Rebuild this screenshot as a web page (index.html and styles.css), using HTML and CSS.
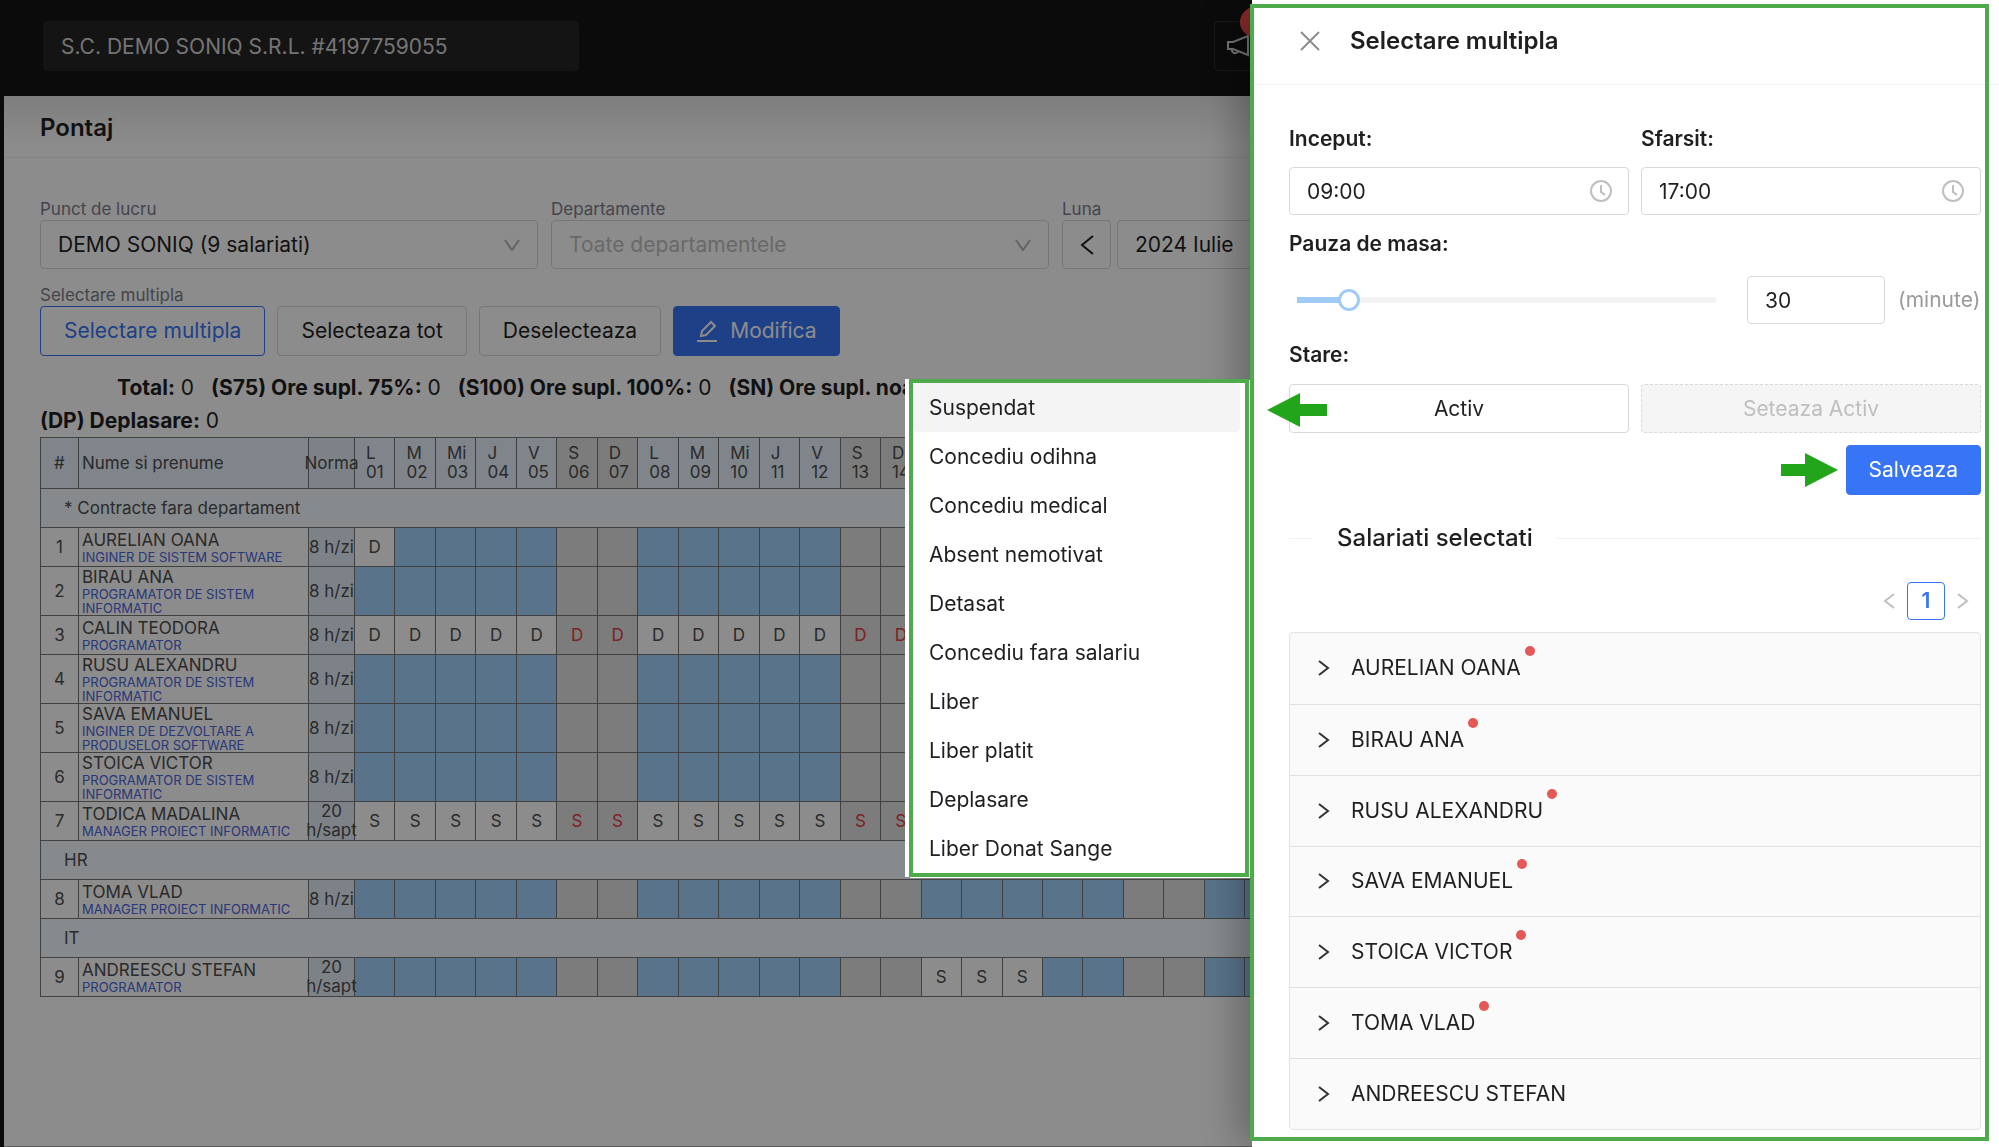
FILE: index.html
```html
<!DOCTYPE html>
<html lang="ro">
<head>
<meta charset="utf-8">
<title>Pontaj</title>
<link rel="stylesheet" href="styles.css">
</head>
<body>
<div class="app">
  <header class="topbar">
    <input class="company" type="text" value="S.C. DEMO SONIQ S.R.L. #4197759055" aria-label="Companie" readonly>
    <button class="announce" type="button" aria-label="Anunturi">
      <svg width="26" height="22" viewBox="0 0 26 22" fill="none" stroke="currentColor" stroke-width="2"><path d="M2 7h5L22 1v19L7 14H2z"/><path d="M6 14a3 3 0 0 0 6 2"/></svg>
      <span class="badge"></span>
    </button>
  </header>

  <main class="page">
    <h1 class="page-title">Pontaj</h1>
    <div class="content">
      <div class="filters">
        <div class="field">
          <label for="punct">Punct de lucru</label>
          <div class="select">
            <select id="punct"><option>DEMO SONIQ (9 salariati)</option></select>
            <svg width="16" height="12" viewBox="0 0 16 12"><path d="M1 1l7 10 7-10"/></svg>
          </div>
        </div>
        <div class="field">
          <label for="dep">Departamente</label>
          <div class="select">
            <select id="dep" class="placeholder"><option>Toate departamentele</option></select>
            <svg width="16" height="12" viewBox="0 0 16 12"><path d="M1 1l7 10 7-10"/></svg>
          </div>
        </div>
        <div class="field">
          <label for="luna">Luna</label>
          <div class="month">
            <button class="btn prev" type="button" aria-label="Luna anterioara"><svg width="14" height="20" viewBox="0 0 14 20" fill="none" stroke="currentColor" stroke-width="2"><path d="M13 1L2 10l11 9"/></svg></button>
            <input id="luna" type="text" value="2024 Iulie">
          </div>
        </div>
      </div>

      <div class="caption">Selectare multipla</div>
      <div class="actions">
        <button class="btn outline" type="button">Selectare multipla</button>
        <button class="btn" type="button">Selecteaza tot</button>
        <button class="btn" type="button">Deselecteaza</button>
        <button class="btn primary" type="button"><svg width="22" height="22" viewBox="0 0 22 22" fill="none" stroke="currentColor" stroke-width="2"><path d="M1 21h20M5 16l1-5 9-9 4 4-9 9z"/></svg>Modifica</button>
      </div>

      <div class="totals">
        <div class="totals-row first"><span><b>Total:</b> 0</span><span><b>(S75) Ore supl. 75%:</b> 0</span><span><b>(S100) Ore supl. 100%:</b> 0</span><span><b>(SN) Ore supl. noapte:</b> 0</span></div>
        <div class="totals-row"><span><b>(DP) Deplasare:</b> 0</span></div>
      </div>

      <table class="sheet">
        <thead><tr id="head"><th class="num">#</th><th class="name">Nume si prenume</th><th class="norma"><span>Norma</span></th></tr></thead>
        <tbody id="rows"></tbody>
      </table>
    </div>
  </main>
</div>

<div class="mask"></div>

<aside class="drawer" role="dialog" aria-labelledby="drawer-title">
  <div class="drawer-head">
    <button class="icon-btn" type="button" aria-label="Inchide"><svg width="20" height="20" viewBox="0 0 20 20"><path d="M1 1l18 18M19 1L1 19"/></svg></button>
    <h2 id="drawer-title">Selectare multipla</h2>
  </div>
  <div class="drawer-body">
    <div class="pair">
      <div class="group">
        <label for="start">Inceput:</label>
        <div class="time"><input id="start" type="text" value="09:00"><svg width="22" height="22" viewBox="0 0 22 22"><circle cx="11" cy="11" r="10"/><path d="M11 5v7l4 3"/></svg></div>
      </div>
      <div class="group">
        <label for="end">Sfarsit:</label>
        <div class="time"><input id="end" type="text" value="17:00"><svg width="22" height="22" viewBox="0 0 22 22"><circle cx="11" cy="11" r="10"/><path d="M11 5v7l4 3"/></svg></div>
      </div>
    </div>
    <label class="row-label" for="pauza">Pauza de masa:</label>
    <div class="pause">
      <input id="pauza" class="slider" type="range" min="0" max="240" value="30">
      <input class="minutes" type="text" value="30" aria-label="Minute">
      <span class="unit">(minute)</span>
    </div>
    <div class="row-label state-label">Stare:</div>
    <div class="pair state">
      <button class="btn" type="button">Activ</button>
      <button class="btn" type="button" disabled>Seteaza Activ</button>
    </div>
    <div class="save">
      <svg width="57" height="34" viewBox="0 0 57 34"><path d="M0 11h24V0l33 17-33 17V23H0z" fill="#22a51b"/></svg>
      <button class="btn primary" type="button">Salveaza</button>
    </div>
    <h3 class="divider"><span>Salariati selectati</span></h3>
    <nav class="pager" aria-label="Pagini">
      <button type="button" aria-label="Inapoi"><svg width="12" height="16" viewBox="0 0 12 16"><path d="M11 1L2 8l9 7"/></svg></button>
      <button type="button" class="current">1</button>
      <button type="button" aria-label="Inainte"><svg width="12" height="16" viewBox="0 0 12 16"><path d="M1 1l9 7-9 7"/></svg></button>
    </nav>
    <div class="people">
      <button type="button"><svg width="12" height="16" viewBox="0 0 12 16"><path d="M1 1l9 7-9 7"/></svg><span class="dot">AURELIAN OANA</span></button>
      <button type="button"><svg width="12" height="16" viewBox="0 0 12 16"><path d="M1 1l9 7-9 7"/></svg><span class="dot">BIRAU ANA</span></button>
      <button type="button"><svg width="12" height="16" viewBox="0 0 12 16"><path d="M1 1l9 7-9 7"/></svg><span class="dot">RUSU ALEXANDRU</span></button>
      <button type="button"><svg width="12" height="16" viewBox="0 0 12 16"><path d="M1 1l9 7-9 7"/></svg><span class="dot">SAVA EMANUEL</span></button>
      <button type="button"><svg width="12" height="16" viewBox="0 0 12 16"><path d="M1 1l9 7-9 7"/></svg><span class="dot">STOICA VICTOR</span></button>
      <button type="button"><svg width="12" height="16" viewBox="0 0 12 16"><path d="M1 1l9 7-9 7"/></svg><span class="dot">TOMA VLAD</span></button>
      <button type="button"><svg width="12" height="16" viewBox="0 0 12 16"><path d="M1 1l9 7-9 7"/></svg><span>ANDREESCU STEFAN</span></button>
    </div>
  </div>
  <div class="highlight"></div>
  <svg class="arrow-left" width="60" height="34" viewBox="0 0 60 34"><path d="M60 11H33V0L0 17l33 17V23h27z" fill="#22a51b"/></svg>
  <div class="menu" role="menu">
    <button type="button" role="menuitem" class="active">Suspendat</button>
    <button type="button" role="menuitem">Concediu odihna</button>
    <button type="button" role="menuitem">Concediu medical</button>
    <button type="button" role="menuitem">Absent nemotivat</button>
    <button type="button" role="menuitem">Detasat</button>
    <button type="button" role="menuitem">Concediu fara salariu</button>
    <button type="button" role="menuitem">Liber</button>
    <button type="button" role="menuitem">Liber platit</button>
    <button type="button" role="menuitem">Deplasare</button>
    <button type="button" role="menuitem">Liber Donat Sange</button>
  </div>
</aside>
<script src="script.js"></script>
</body>
</html>
```
FILE: styles.css
```css
* { box-sizing: border-box; }
body {
  margin: 0;
  height: 100vh;
  overflow: hidden;
  background: #141414;
  color: #1f1f1f;
  font: 21px/32px Inter, "Liberation Sans", sans-serif;
}
button, input, select { font: inherit; color: inherit; margin: 0; }
h1, h2, h3 { margin: 0; font-size: 24px; font-weight: 600; line-height: 32px; }

.app { display: flex; flex-direction: column; height: 100vh; overflow: hidden; }
.topbar { display: flex; align-items: flex-start; justify-content: space-between; height: 96px; padding: 21px 735px 0 43px; flex: none; }
.company { width: 536px; height: 50px; padding: 0 18px; border: 0; border-radius: 4px; background: #262626; color: #d4d4d4; }
.announce { position: relative; width: 50px; height: 50px; padding: 0 11px; display: flex; align-items: center; background: none; border: 1px solid #303030; border-radius: 4px; color: #d4d4d4; }
.announce svg { flex: none; }
.badge { position: absolute; top: -15px; left: 25px; width: 30px; height: 30px; border-radius: 15px; background: #ff4d4f; }

.page { flex: 1; margin-left: 4px; background: linear-gradient(#e6e6e6, #fff 50px); border-bottom: 1px solid #aaa; }
.page-title { padding: 16px 36px 13px; border-bottom: 1px solid #eee; }
.content { padding: 40px 36px 0; }

.filters { display: flex; align-items: flex-end; gap: 13px; }
.field { display: flex; flex-direction: column; width: 498px; }
.field label, .caption { font-size: 17px; line-height: 22px; color: #7d7d8c; }
.select { display: grid; align-items: center; }
.select select, .select svg { grid-area: 1 / 1; }
.select select { appearance: none; width: 100%; height: 49px; padding: 0 17px; border: 1px solid #d9d9d9; border-radius: 4px; background: none; }
.select .placeholder { color: #bfbfbf; opacity: 1; }
.select svg { justify-self: end; margin-right: 18px; fill: none; stroke: #b5b5b5; stroke-width: 2; }
.month { display: flex; gap: 6px; }
.month input { width: 240px; height: 49px; padding: 0 17px; border: 1px solid #d9d9d9; border-radius: 4px; background: none; }
.btn { display: inline-flex; align-items: center; justify-content: center; gap: 12px; height: 50px; padding: 0 23px; border: 1px solid #d9d9d9; border-radius: 4px; background: none; white-space: nowrap; }
.btn.prev { width: 49px; height: 49px; padding: 0; }
.btn.outline { border-color: #3875f6; color: #3875f6; }
.btn.primary { padding: 0 22px; background: #3875f6; border-color: #3875f6; color: #fff; }
.caption { margin-top: 15px; }
.actions { display: flex; gap: 12px; }

.totals { margin-top: 15px; line-height: 33px; }
.totals b { font-weight: 700; }
.totals-row { display: flex; gap: 17px; white-space: nowrap; }
.totals-row.first { padding-left: 77px; }

.sheet { width: 1246px; table-layout: fixed; border-collapse: collapse; font-size: 17px; line-height: 19px; color: #4d4d4d; }
.sheet th, .sheet td { padding: 0; border: 1px solid #777; font-weight: 400; text-align: center; height: 39px; }
.sheet th { height: 51px; background: #e9f2fd; }
.sheet .num { width: 38px; }
.sheet .name { width: 230px; padding-left: 3px; text-align: left; line-height: 20px; }
.sheet .norma { width: 46px; background: #e4edf9; }
.sheet .norma span { display: flex; justify-content: center; margin: 0 -8px; }
.sheet th.day { padding-left: 11px; text-align: left; }
.sheet th.off { background: #e2e2e2; }
.sheet td.work { background: #a2d2fc; }
.sheet td.off { background: #e2e2e2; color: #e23c3c; }
.sheet td.dept { padding-left: 23px; text-align: left; background: #f4fbff; }
.sheet small { display: block; font-size: 13px; line-height: 14px; color: #4a66dd; }

.mask { position: fixed; inset: 0; background: rgba(0, 0, 0, .45); }

.drawer { position: fixed; top: 0; right: 0; width: 747px; height: 100vh; display: flex; flex-direction: column; background: #fff; box-shadow: -12px 0 40px rgba(0, 0, 0, .3); }
.drawer-head { display: flex; align-items: center; gap: 30px; height: 85px; padding: 0 48px 2px; border-bottom: 1px solid #f0f0f0; }
.icon-btn { display: flex; padding: 0; border: 0; background: none; }
.icon-btn svg { fill: none; stroke: #8c8c8c; stroke-width: 2; }
.drawer-body { flex: 1; display: flex; flex-direction: column; padding: 38px 18px 17px 37px; }
.pair { display: grid; grid-template-columns: 1fr 1fr; gap: 12px; }
.group { display: flex; flex-direction: column; gap: 12px; }
.group label, .row-label { font-weight: 600; }
.time { display: grid; align-items: center; }
.time input, .time svg { grid-area: 1 / 1; }
.time svg { justify-self: end; margin-right: 17px; fill: none; stroke: #bfbfbf; stroke-width: 2; }
.time input, .minutes { width: 100%; height: 48px; padding: 0 17px; border: 1px solid #d9d9d9; border-radius: 4px; background: #fff; }
.row-label { margin-top: 13px; }
.pause { display: flex; align-items: center; margin-top: 16px; }
.slider { appearance: none; flex: 1; min-width: 0; height: 22px; margin: 0 20px 0 -3px; background: none; }
.slider::-webkit-slider-runnable-track { height: 6px; background: linear-gradient(90deg, transparent 11px, #a0cbf5 11px, #a0cbf5 63px, #f3f3f3 63px, #f3f3f3 calc(100% - 11px), transparent calc(100% - 11px)); }
.slider::-webkit-slider-thumb { appearance: none; width: 22px; height: 22px; margin-top: -8px; border: 3px solid #a0cbf5; border-radius: 50%; background: #fff; }
.minutes { width: 138px; }
.unit { width: 96px; padding-left: 13px; color: #9a9a9a; white-space: nowrap; }
.state-label { margin-top: 15px; }
.state { margin-top: 13px; }
.state .btn { height: 49px; }
.btn:disabled { background: #f5f5f5; border-style: dashed; color: #bfbfbf; }
.save { display: flex; align-items: center; justify-content: flex-end; gap: 8px; margin-top: 12px; }
.divider { display: flex; align-items: center; gap: 24px; margin-top: 27px; font-weight: 500; }
.divider::before, .divider::after { content: ""; height: 1px; width: 24px; background: #f0f0f0; }
.divider::after { flex: 1; }
.pager { display: flex; align-items: center; justify-content: flex-end; gap: 12px; margin: 28px 12px 12px 0; }
.pager button { display: flex; align-items: center; justify-content: center; height: 38px; padding: 0; border: 0; background: none; }
.pager .current { width: 38px; border: 1px solid #3875f6; border-radius: 4px; color: #3875f6; font-weight: 600; }
.pager svg { fill: none; stroke: #bfbfbf; stroke-width: 2; }
.people { flex: 1; display: grid; grid-auto-rows: 1fr; border: 1px solid #e3e3e3; border-radius: 4px; background: #fafafa; }
.people button { display: flex; align-items: center; gap: 21px; padding: 0 28px; border: 0; border-top: 1px solid #e0e0e0; background: none; }
.people button:first-child { border-top: 0; }
.people svg { fill: none; stroke: #333; stroke-width: 2; }
.dot { position: relative; }
.dot::after { content: ""; position: absolute; top: -6px; right: -14px; width: 10px; height: 10px; border-radius: 50%; background: #e45856; }

.highlight { position: absolute; top: 4px; right: 10px; bottom: 6px; left: -2px; border: 4px solid #4faa4b; pointer-events: none; }
.arrow-left { position: absolute; top: 393px; left: 15px; }
.menu { position: absolute; top: 379px; right: 750px; width: 340px; display: flex; flex-direction: column; padding-right: 5px; background: #fff; border: 4px solid #4faa4b; box-shadow: -4px 0 #fff, 1px 1px #fff; }
.menu button { height: 49px; padding: 0 16px; border: 0; border-radius: 4px; background: none; text-align: left; }
.menu .active { background: #f4f4f4; }
```
FILE: script.js
```js
const weekdays = ["L", "M", "Mi", "J", "V", "S", "D"];
const dayCount = 23;
const loadedDays = 14;
const isOff = day => (day - 1) % 7 > 4;

const people = [
  { dept: "* Contracte fara departament" },
  { name: "AURELIAN OANA", job: "INGINER DE SISTEM SOFTWARE", norma: "8 h/zi", marks: d => d === 1 ? "D" : "" },
  { name: "BIRAU ANA", job: "PROGRAMATOR DE SISTEM INFORMATIC", norma: "8 h/zi" },
  { name: "CALIN TEODORA", job: "PROGRAMATOR", norma: "8 h/zi", marks: d => d <= loadedDays ? "D" : "" },
  { name: "RUSU ALEXANDRU", job: "PROGRAMATOR DE SISTEM INFORMATIC", norma: "8 h/zi" },
  { name: "SAVA EMANUEL", job: "INGINER DE DEZVOLTARE A PRODUSELOR SOFTWARE", norma: "8 h/zi" },
  { name: "STOICA VICTOR", job: "PROGRAMATOR DE SISTEM INFORMATIC", norma: "8 h/zi" },
  { name: "TODICA MADALINA", job: "MANAGER PROIECT INFORMATIC", norma: "20<br>h/sapt", marks: d => d <= loadedDays ? "S" : "" },
  { dept: "HR" },
  { name: "TOMA VLAD", job: "MANAGER PROIECT INFORMATIC", norma: "8 h/zi" },
  { dept: "IT" },
  { name: "ANDREESCU STEFAN", job: "PROGRAMATOR", norma: "20<br>h/sapt", marks: d => d > 14 && d < 18 ? "S" : "" }
];

let head = "";
for (let d = 1; d <= dayCount; d++) {
  const label = d <= loadedDays ? `${weekdays[(d - 1) % 7]}<br>${String(d).padStart(2, "0")}` : "";
  head += `<th class="day ${isOff(d) ? "off" : ""}">${label}</th>`;
}
document.getElementById("head").insertAdjacentHTML("beforeend", head);

let index = 0;
document.getElementById("rows").innerHTML = people.map(p => {
  if (p.dept) return `<tr><td class="dept" colspan="${dayCount + 3}">${p.dept}</td></tr>`;
  let cells = "";
  for (let d = 1; d <= dayCount; d++) {
    const mark = p.marks ? p.marks(d) : "";
    cells += `<td class="${isOff(d) ? "off" : mark ? "" : "work"}">${mark}</td>`;
  }
  return `<tr><td class="num">${++index}</td><td class="name">${p.name}<small>${p.job}</small></td><td class="norma"><span>${p.norma}</span></td>${cells}</tr>`;
}).join("");
```
